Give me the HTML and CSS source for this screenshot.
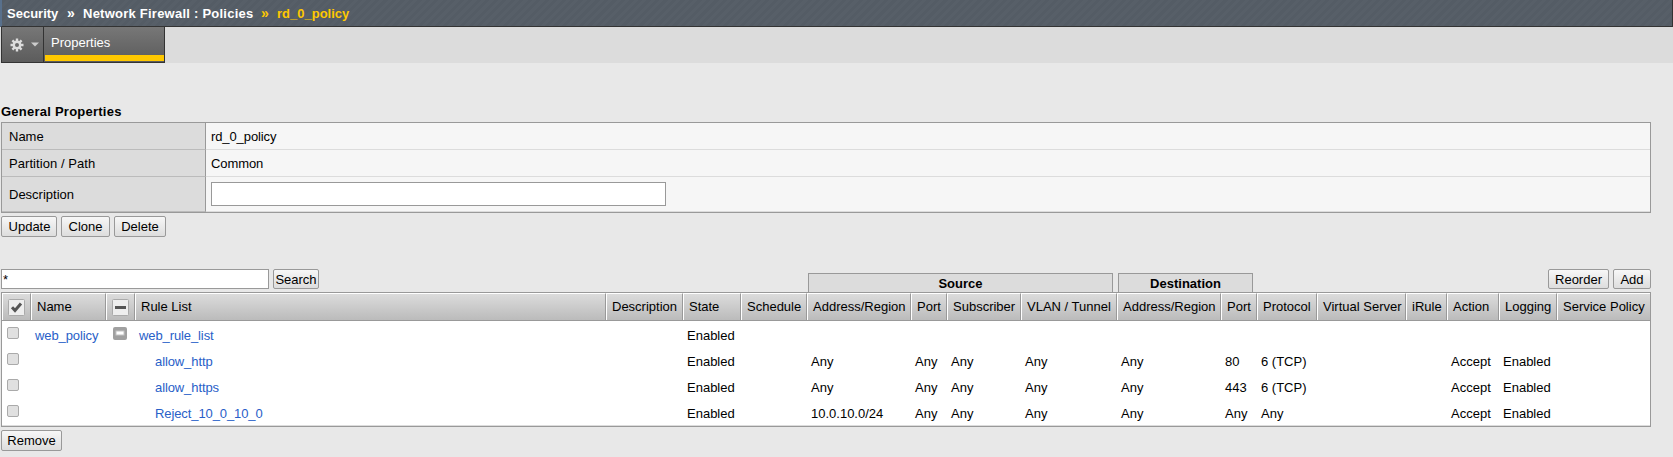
FILE: index.html
```html
<!DOCTYPE html>
<html lang="en">
<head>
<meta charset="utf-8">
<title>rd_0_policy</title>
<link rel="stylesheet" href="styles.css">
</head>
<body>
<header class="crumbs"><span class="c1">Security</span><span class="sep">»</span><span class="c2">Network Firewall : Policies</span><span class="sep s2">»</span><span class="c3">rd_0_policy</span></header>
<nav class="tabs">
  <div class="gear">
    <svg class="cog" width="14" height="14" viewBox="0 0 14 14"><g stroke="#ddd" stroke-width="2.4"><path d="M7 .5v13M.5 7h13M2.4 2.4l9.2 9.2M11.6 2.4l-9.2 9.2"/></g><circle cx="7" cy="7" r="4.4" fill="#ddd"/><circle cx="7" cy="7" r="2" fill="#6a6a6a"/></svg>
    <svg width="8" height="5" viewBox="0 0 8 5"><path d="M0 .5h8L4 4.5z" fill="#ccc"/></svg>
  </div>
  <div class="tab"><span>Properties</span></div>
</nav>
<main>
  <h2><span>General Properties</span></h2>
  <dl class="props">
    <dt>Name</dt><dd>rd_0_policy</dd>
    <dt class="path">Partition / Path</dt><dd>Common</dd>
    <dt class="tall">Description</dt><dd class="tall"><input class="desc" type="text"></dd>
  </dl>
  <div class="actions"><button class="b-upd">Update</button><button class="b-clo">Clone</button><button class="b-del">Delete</button></div>
  <div class="toolbar">
    <input class="query" type="text" value="*"><button class="b-sea">Search</button>
    <div class="group g-src">Source</div><div class="group g-dst">Destination</div>
    <button class="b-reo">Reorder</button><button class="b-add">Add</button>
  </div>
  <div class="rules">
    <div class="row head">
      <div class="ic"><svg width="17" height="17" viewBox="0 0 17 17"><rect x=".5" y=".5" width="16" height="16" rx="1" fill="#eee" stroke="#aaa"/><path d="M4 8.2l3 3.2L13 4.5" fill="none" stroke="#555" stroke-width="3"/></svg></div>
      <div>Name</div>
      <div class="ic"><svg width="17" height="17" viewBox="0 0 17 17"><rect x=".5" y=".5" width="16" height="16" rx="1" fill="#eee" stroke="#aaa"/><rect x="3" y="7" width="11" height="3" fill="#555"/></svg></div>
      <div>Rule List</div><div>Description</div><div>State</div><div>Schedule</div><div>Address/Region</div><div>Port</div><div>Subscriber</div><div>VLAN / Tunnel</div><div>Address/Region</div><div>Port</div><div>Protocol</div><div>Virtual Server</div><div>iRule</div><div>Action</div><div>Logging</div><div>Service Policy</div>
    </div>
    <div class="row"><div><i class="box"></i></div><div><a>web_policy</a></div><div><svg class="minus" width="14" height="13" viewBox="0 0 14 13"><rect width="14" height="13" rx="2" fill="#a0a0a0"/><rect x="3" y="4" width="8" height="4" fill="#fff" stroke="#c4c4c4"/></svg></div><div><a>web_rule_list</a></div><div></div><div>Enabled</div></div>
    <div class="row"><div><i class="box"></i></div><div></div><div></div><div class="sub"><a>allow_http</a></div><div></div><div>Enabled</div><div></div><div>Any</div><div>Any</div><div>Any</div><div>Any</div><div>Any</div><div>80</div><div>6 (TCP)</div><div></div><div></div><div>Accept</div><div>Enabled</div><div></div></div>
    <div class="row"><div><i class="box"></i></div><div></div><div></div><div class="sub"><a>allow_https</a></div><div></div><div>Enabled</div><div></div><div>Any</div><div>Any</div><div>Any</div><div>Any</div><div>Any</div><div>443</div><div>6 (TCP)</div><div></div><div></div><div>Accept</div><div>Enabled</div><div></div></div>
    <div class="row last"><div><i class="box"></i></div><div></div><div></div><div class="sub"><a>Reject_10_0_10_0</a></div><div></div><div>Enabled</div><div></div><div class="addr">10.0.10.0/24</div><div>Any</div><div>Any</div><div>Any</div><div>Any</div><div>Any</div><div>Any</div><div></div><div></div><div>Accept</div><div>Enabled</div><div></div></div>
  </div>
  <div class="foot"><button class="b-rem">Remove</button></div>
</main>
</body>
</html>
```
FILE: styles.css
```css
* { box-sizing: border-box; }
body { margin: 0; height: 457px; overflow: hidden; background: #e8e8e8; color: #000; font: 13px "Liberation Sans", Arial, sans-serif; white-space: nowrap; }
.crumbs { height: 27px; display: flex; padding-left: 5px; line-height: 27px; font-weight: bold; color: #fff; border-left: 2px solid #58708c; border-right: 1px solid #333; border-bottom: 1px solid #333; background: repeating-linear-gradient(135deg, #545c65 0 3px, #575f68 3px 6px); }
.c1 { width: 60px; }
.sep { width: 16px; font-size: 14px; }
.c2 { width: 178px; letter-spacing: 0.24px; }
.s2, .c3 { color: #ffc800; }
.tabs { height: 36px; display: flex; padding-left: 1px; background: #dcdcdc; }
.gear { width: 43px; height: 36px; display: flex; align-items: center; gap: 7px; padding-left: 8px; border: 1px solid #333; border-top: 0; background: linear-gradient(#777, #5c5c5c); }
.tab { width: 121px; height: 36px; padding: 0 0 0 7px; line-height: 31px; color: #fff; border: 1px solid #333; border-width: 0 1px 1px 0; background: linear-gradient(#ffc800, #ffc800) 1px 28px / 119px 6px no-repeat, linear-gradient(#777, #5c5c5c); }
main { padding: 39px 22px 0 1px; }
h2 { margin: 0; height: 20px; line-height: 19px; font-size: 13px; letter-spacing: 0.24px; }
.props { margin: 0; height: 91px; display: grid; grid-template-columns: 204px 1fr; grid-template-rows: 27px 27px 35px; border: 1px solid #999; }
.props dt { margin: 0; padding-left: 7px; line-height: 27px; background: #dcdcdc; border-right: 1px solid #999; border-bottom: 1px solid #bbb; }
.props .path { letter-spacing: 0.06px; }
.props dd { margin: 0; padding-left: 5px; line-height: 27px; background: #f6f6f6; border-bottom: 1px solid #dcdcdc; letter-spacing: -0.1px; }
.props .tall { line-height: 35px; display: flex; align-items: center; }
.desc { width: 455px; height: 24px; border: 1px solid #999; background: #fff; }
button { height: 21px; padding: 0; font: inherit; color: #000; border: 1px solid #999; border-radius: 2px; background: linear-gradient(#f7f7f7, #ddd); flex: none; }
.actions { height: 56px; padding-top: 3px; display: flex; gap: 4px; }
.b-upd { width: 56px; padding-left: 1px; }
.b-clo { width: 49px; }
.b-del { width: 52px; }
.toolbar { height: 23px; display: flex; align-items: flex-start; }
.query { width: 268px; height: 20px; padding: 0 1px; font: inherit; border: 1px solid #999; background: #fff; }
.b-sea { width: 46px; height: 20px; margin-left: 4px; }
.group { height: 19px; margin-top: 4px; line-height: 20px; text-align: center; font-weight: bold; background: #dcdcdc; border: 1px solid #999; border-bottom: 0; }
.g-src { width: 305px; margin-left: 489px; }
.g-dst { width: 135px; margin-left: 5px; }
.b-reo { width: 61px; height: 20px; margin-left: auto; margin-right: 4px; }
.b-add { width: 38px; height: 20px; }
.rules { height: 135px; border: 1px solid #999; background: #fff; }
.row { display: grid; grid-template-columns: 29px 75px 29px 471px 77px 58px 66px 104px 36px 74px 96px 104px 36px 60px 89px 41px 52px 58px 93px; height: 26px; line-height: 30px; }
.row > div { height: 26px; padding-left: 4px; }
.row .sub { padding-left: 20px; }
.row.head { height: 28px; line-height: 26px; border-bottom: 1px solid #999; background: linear-gradient(#ddd, #bbb); }
.head > div { height: 27px; padding-left: 5px; border-left: 1px solid #fff; border-top: 1px solid #fff; border-right: 1px solid #999; }
.head > div:last-child { border-right: 0; }
.head .ic { display: flex; align-items: center; }
.last { height: 27px; border-bottom: 1px solid #dcdcdc; }
a { color: #2860c8; letter-spacing: -0.1px; }
.box { display: block; width: 12px; height: 12px; margin: 6px 0 0 1px; border: 1px solid #aaa; border-radius: 2px; background: #e0e0e0; }
.minus { display: block; margin: 6px 0 0 3px; }
.foot { padding-top: 3px; }
.b-rem { width: 61px; }
```
